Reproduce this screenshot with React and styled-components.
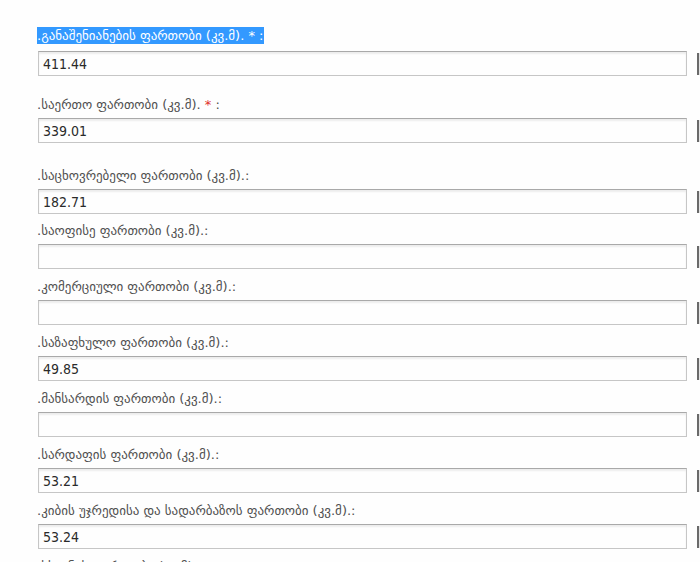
import styled, { createGlobalStyle } from "styled-components";

const GlobalStyle = createGlobalStyle`
    html, body {
        margin: 0;
        padding: 0;
        background: #fefefe;
        overflow: hidden;
    }
`;

const Form = styled.div`
    padding: 29px 0 0 38px;
    width: 700px;
    box-sizing: border-box;
    font-family: "DejaVu Sans", sans-serif;
`;

const Field = styled.div`
    margin-bottom: ${(p) => p.$after}px;
`;

const Label = styled.div`
    height: 18px;
    line-height: 18px;
    margin: 0 0 4px -1px;
    font-size: 13px;
    color: #505050;
    white-space: nowrap;
`;

const Selected = styled.span`
    display: inline-block;
    vertical-align: top;
    margin-top: -2px;
    line-height: 17px;
    background: #3399ff;
    color: #ffffff;
    padding-right: 1px;
`;

const Star = styled.span`
    color: ${(p) => (p.$selected ? "#ffffff" : "#e0302a")};
`;

const Row = styled.div`
    display: flex;
    align-items: center;
    gap: 10px;
`;

const Input = styled.input`
    flex: none;
    width: 649px;
    height: 25px;
    box-sizing: border-box;
    margin: 0;
    padding: 1px 4px 0;
    border: 1px solid #c6c6c6;
    border-top-color: #a9a9a9;
    box-shadow: inset 0 2px 2px rgba(0, 0, 0, 0.07);
    background: #fefefe;
    font-family: "DejaVu Sans Condensed", "DejaVu Sans", sans-serif;
    font-stretch: condensed;
    font-size: 14px;
    color: #2a2a2a;
    outline: none;
`;

const SideButton = styled.div`
    flex: none;
    width: 20px;
    height: 22px;
    box-sizing: border-box;
    border-left: 2px solid #6a6a6a;
    background: #e4e4e4;
`;

const fields = [
    { label: ".განაშენიანების ფართობი (კვ.მ).", required: true, selected: true, value: "411.44", after: 20 },
    { label: ".საერთო ფართობი (კვ.მ).", required: true, value: "339.01", after: 24 },
    { label: ".საცხოვრებელი ფართობი (კვ.მ).:", value: "182.71", after: 8 },
    { label: ".საოფისე ფართობი (კვ.მ).:", value: "", after: 9 },
    { label: ".კომერციული ფართობი (კვ.მ).:", value: "", after: 9 },
    { label: ".საზაფხულო ფართობი (კვ.მ).:", value: "49.85", after: 9 },
    { label: ".მანსარდის ფართობი (კვ.მ).:", value: "", after: 9 },
    { label: ".სარდაფის ფართობი (კვ.მ).:", value: "53.21", after: 9 },
    { label: ".კიბის უჯრედისა და სადარბაზოს ფართობი (კვ.მ).:", value: "53.24", after: 9 },
    { label: ".სხვენის ფართობი (კვ.მ).:", value: "", after: 9 },
];

function LabelText({ field }) {
    if (!field.required) return field.label;
    const content = (
        <>
            {field.label} <Star $selected={field.selected}>*</Star> :
        </>
    );
    return field.selected ? <Selected>{content}</Selected> : content;
}

export default function App() {
    return (
        <>
            <GlobalStyle />
            <Form>
                {fields.map((f, i) => (
                    <Field key={i} $after={f.after}>
                        <Label>
                            <LabelText field={f} />
                        </Label>
                        <Row>
                            <Input defaultValue={f.value} />
                            <SideButton />
                        </Row>
                    </Field>
                ))}
            </Form>
        </>
    );
}
